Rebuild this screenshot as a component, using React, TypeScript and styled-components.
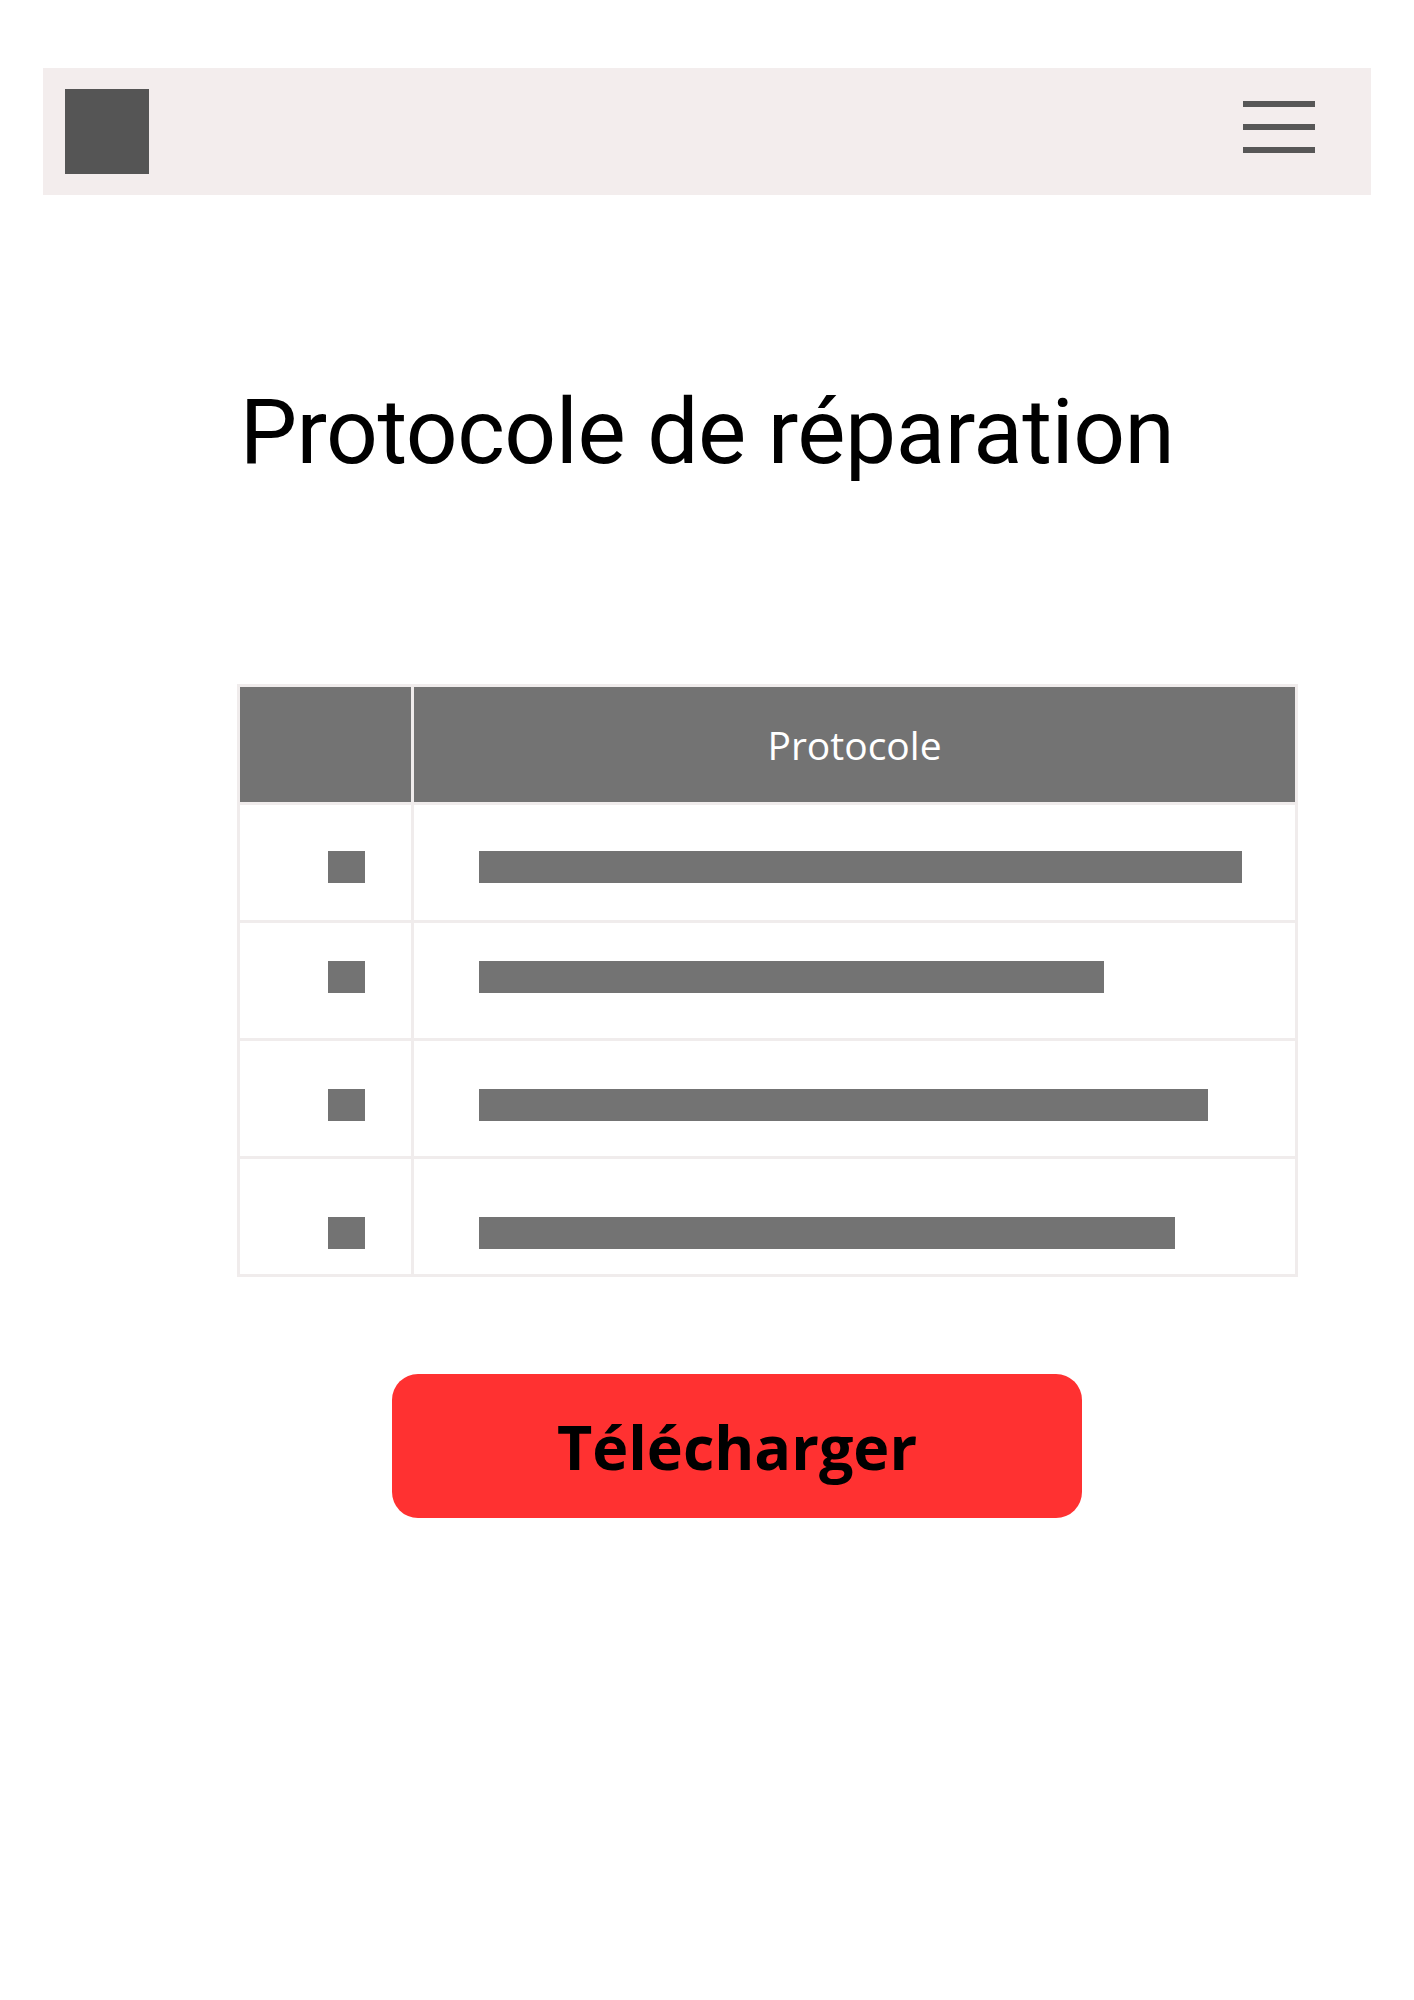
import React from "react";
import styled, { createGlobalStyle } from "styled-components";

const Global = createGlobalStyle`
  html, body { margin: 0; padding: 0; background: #ffffff; }
  body { font-family: "Open Sans", Roboto, sans-serif; }
`;

const Page = styled.div`
  width: 1414px;
  display: flex;
  flex-direction: column;
  padding-top: 68px;
`;

const TopBar = styled.header`
  margin: 0 43px;
  height: 127px;
  background: #f3eded;
  display: flex;
  align-items: center;
  justify-content: space-between;
  padding: 0 56px 0 22px;
  box-sizing: border-box;
`;

const Logo = styled.div`
  width: 84px;
  height: 85px;
  background: #555555;
`;

const Burger = styled.div`
  width: 72px;
  display: flex;
  flex-direction: column;
  gap: 17px;
  margin-bottom: 10px;
`;

const BurgerLine = styled.span`
  display: block;
  height: 6px;
  background: #575757;
`;

const Title = styled.h1`
  margin: 192px 0 0;
  font-family: Roboto, "Open Sans", sans-serif;
  font-weight: 400;
  font-size: 91px;
  line-height: 90px;
  color: #000;
  text-align: center;
  letter-spacing: -0.5px;
`;

const Table = styled.div`
  margin: 207px 0 0 237px;
  width: 1061px;
  box-sizing: border-box;
  display: grid;
  grid-template-columns: 171px 1fr;
  grid-auto-rows: 115px;
  gap: 3px;
  padding: 3px;
  background: #f0ecec;
`;

const HeadCell = styled.div`
  background: #737373;
  color: #ffffff;
  font-family: "Open Sans", sans-serif;
  font-size: 39px;
  display: flex;
  align-items: center;
  justify-content: center;
`;

const Cell = styled.div<{ $top: number; $left: number }>`
  background: #ffffff;
  display: flex;
  align-items: flex-start;
  padding-top: ${(p) => p.$top}px;
  padding-left: ${(p) => p.$left}px;
  box-sizing: border-box;
`;

const Bullet = styled.div`
  width: 37px;
  height: 32px;
  background: #737373;
`;

const Bar = styled.div<{ $w: number }>`
  width: ${(p) => p.$w}px;
  height: 32px;
  background: #737373;
`;

const Button = styled.button`
  margin: 97px 0 0 392px;
  width: 690px;
  height: 144px;
  border: none;
  border-radius: 26px;
  background: #ff3131;
  color: #000;
  font-family: "Open Sans", sans-serif;
  font-weight: 700;
  font-size: 61px;
  display: flex;
  align-items: center;
  justify-content: center;
  padding: 0;
  cursor: pointer;
`;

const rows = [
  { top: 46, w: 763 },
  { top: 38, w: 625 },
  { top: 48, w: 729 },
  { top: 58, w: 696 },
];

export default function App() {
  return (
    <>
      <Global />
      <Page>
        <TopBar>
          <Logo />
          <Burger>
            <BurgerLine />
            <BurgerLine />
            <BurgerLine />
          </Burger>
        </TopBar>
        <Title>Protocole de réparation</Title>
        <Table>
          <HeadCell />
          <HeadCell>Protocole</HeadCell>
          {rows.map((r, i) => (
            <React.Fragment key={i}>
              <Cell $top={r.top} $left={88}>
                <Bullet />
              </Cell>
              <Cell $top={r.top} $left={65}>
                <Bar $w={r.w} />
              </Cell>
            </React.Fragment>
          ))}
        </Table>
        <Button>Télécharger</Button>
      </Page>
    </>
  );
}
